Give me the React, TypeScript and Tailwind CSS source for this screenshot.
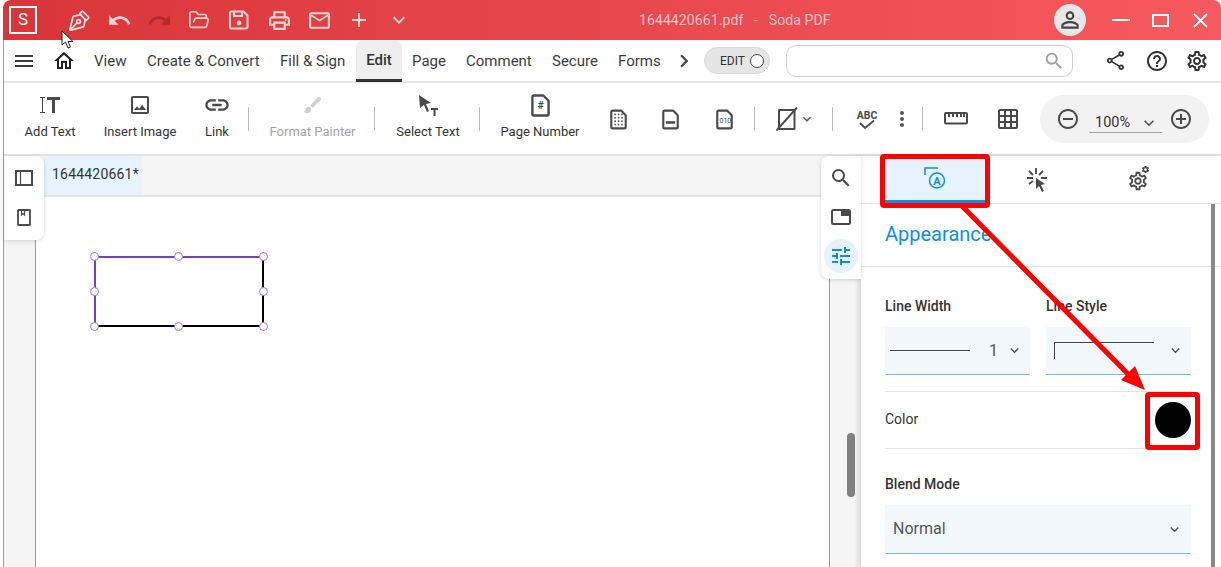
import React from "react";
import { PenTool, FolderOpen } from "lucide-react";
import {
  MdUndo, MdRedo, MdOutlinePrint, MdMailOutline, MdAdd, MdExpandMore, MdMenu, MdOutlineHome,
  MdChevronRight, MdOutlineShare, MdHelpOutline, MdOutlineSettings, MdSettings, MdSearch, MdRemoveCircleOutline,
  MdAddCircleOutline, MdOutlineImage, MdLink, MdBrush, MdMoreVert, MdTune, MdPersonOutline,
} from "react-icons/md";

const Sep = () => <div className="w-px h-6 bg-[#bdbdbd] shrink-0 mt-[24px]" />;

function Tool({ w, label, icon, muted }: { w: string; label: string; icon: React.ReactNode; muted?: boolean }) {
  return (
    <div className={`${w} shrink-0 flex flex-col items-center pt-[10px]`}>
      <div className="h-6 flex items-center justify-center">{icon}</div>
      <span className={`mt-[7px] text-[13px] leading-[16px] whitespace-nowrap ${muted ? "text-[#a3a3a3]" : "text-[#333]"}`}>{label}</span>
    </div>
  );
}

const DocShape = ({ w = 17, h = 21, children }: { w?: number; h?: number; children?: React.ReactNode }) => (
  <svg width={w} height={h} viewBox="0 0 20 24" fill="none" stroke="#4a4a4a" strokeWidth="2.500">
    <path d="M3 1.500h10l5.500 5.500v14a1.500 1.500 0 0 1-1.500 1.500H3A1.500 1.500 0 0 1 1.500 21V3A1.500 1.500 0 0 1 3 1.500z" strokeLinejoin="round" />
    {children}
  </svg>
);

function MenuItem({ w, children }: { w: string; children: React.ReactNode }) {
  return <span className={`${w} shrink-0 pt-[1px] text-[15px] text-[#3d3d3d] whitespace-nowrap`}>{children}</span>;
}

export default function App() {
  return (
    <div className="relative w-[1221px] h-[567px] overflow-hidden bg-white pl-[3px] flex flex-col" style={{ fontFamily: "Roboto, sans-serif" }}>
      {/* title bar */}
      <div className="h-10 shrink-0 rounded-t-lg bg-gradient-to-r from-[#d83538] to-[#f75960] flex items-center text-white">
        <div className="ml-[6px] w-[28px] h-[28px] border-2 border-white flex items-center justify-center text-[17px]">S</div>
        <div className="ml-[22px] flex items-center text-[#fbd5d6]">
          <span className="w-10 flex justify-center"><PenTool size={23} strokeWidth={1.8} className="text-[#fde3e3] -scale-y-100" /></span>
          <span className="w-10 flex justify-center"><MdUndo size={25} /></span>
          <span className="w-10 flex justify-center text-[#b02a30]"><MdRedo size={25} /></span>
          <span className="w-10 flex justify-center"><FolderOpen size={22} strokeWidth={1.8} /></span>
          <span className="w-10 flex justify-center">
            <svg width="20" height="20" viewBox="0 0 20 20" fill="none" stroke="currentColor" strokeWidth="2">
              <path d="M2.500 1.500h12l4 4v11.500a1.500 1.500 0 0 1-1.500 1.500H2.500A1.500 1.500 0 0 1 1 17V3a1.500 1.500 0 0 1 1.500-1.500z" />
              <path d="M5 2v4h8V2" />
              <circle cx="10" cy="13" r="2.400" fill="currentColor" stroke="none" />
            </svg>
          </span>
          <span className="w-10 flex justify-center"><MdOutlinePrint size={25} /></span>
          <span className="w-10 flex justify-center"><MdMailOutline size={25} /></span>
          <span className="w-10 flex justify-center"><MdAdd size={24} /></span>
          <span className="w-10 flex justify-center"><MdExpandMore size={24} /></span>
        </div>
        <div className="ml-[220px] text-[14px] text-[#fbc4c6] whitespace-pre w-[415px] tracking-[0.1px]">1644420661.pdf{"   -   "}Soda PDF</div>
        <div className="w-8 h-8 rounded-full bg-[#e8e8e8] flex items-center justify-center text-[#444]"><MdPersonOutline size={26} /></div>
        <div className="ml-[26px] w-[18px] h-[2px] bg-white" />
        <div className="ml-[22px] w-[17px] h-[13px] border-2 border-white" />
        <svg className="ml-[24px]" width="15" height="15" viewBox="0 0 15 15" stroke="white" strokeWidth="1.8"><path d="M1 1l13 13M14 1L1 14" /></svg>
      </div>

      <div className="flex-1 min-h-0 flex flex-col border-l border-[#9e9e9e]">
        {/* menu bar */}
        <div className="h-[43px] shrink-0 border-b-2 border-[#e6e6e6] flex items-center bg-white">
          <span className="ml-[8px] w-[40px]"><MdMenu size={24} className="text-[#3d3d3d]" /></span>
          <span className="w-[42px]"><MdOutlineHome size={24} className="text-[#222]" /></span>
          <MenuItem w="w-[53px]">View</MenuItem>
          <MenuItem w="w-[133px]">Create &amp; Convert</MenuItem>
          <MenuItem w="w-[76px]">Fill &amp; Sign</MenuItem>
          <div className="w-[46px] h-[41px] mt-[1px] pt-[2px] shrink-0 rounded-t-md bg-[#eeeeee] border-b-[3px] border-[#333] flex items-center justify-center text-[15px] font-medium text-[#333]">Edit</div>
          <MenuItem w="w-[54px] ml-[10px]">Page</MenuItem>
          <MenuItem w="w-[86px]">Comment</MenuItem>
          <MenuItem w="w-[66px]">Secure</MenuItem>
          <MenuItem w="w-[53px]">Forms</MenuItem>
          <MdChevronRight size={26} className="text-[#444] shrink-0" />
          <div className="ml-[7px] w-[66px] h-[27px] shrink-0 rounded-full bg-[#e5e5e5] border border-[#d9d9d9] flex items-center pl-[15px] text-[12px] text-[#333]">
            EDIT
            <span className="ml-[5px] w-[14px] h-[14px] rounded-full border border-[#444] bg-white" />
          </div>
          <div className="ml-[16px] w-[287px] h-[32px] shrink-0 rounded-[10px] border border-[#cfcfcf] flex items-center justify-end pr-[7px]">
            <MdSearch size={22} className="text-[#9e9e9e]" />
          </div>
          <MdOutlineShare size={23} className="ml-[31px] shrink-0 text-[#333]" />
          <MdHelpOutline size={24} className="ml-[18px] shrink-0 text-[#333]" />
          <MdOutlineSettings size={24} className="ml-[16px] shrink-0 text-[#333]" />
        </div>

        {/* toolbar */}
        <div className="h-[71px] shrink-0 flex items-start bg-white">
          <Tool w="w-[92px]" label="Add Text" icon={
            <svg width="20" height="16" viewBox="0 0 20 16" fill="#4a4a4a">
              <path d="M0 0h5v1H3v14h2v1H0v-1h2V1H0zM7 0h13v3h-5v13h-3V3H7z" />
            </svg>} />
          <Tool w="w-[88px]" label="Insert Image" icon={<MdOutlineImage size={24} className="text-[#4a4a4a]" />} />
          <Tool w="w-[64px] pl-[2px]" label="Link" icon={<MdLink size={28} className="text-[#4a4a4a]" />} />
          <Sep />
          <Tool w="w-[125px] pl-[2px]" label="Format Painter" muted icon={<MdBrush size={22} className="text-[#cfcfcf]" />} />
          <Sep />
          <Tool w="w-[104px] pl-[2px]" label="Select Text" icon={
            <svg width="22" height="22" viewBox="0 0 22 22" fill="#4a4a4a">
              <path d="M2 1l12 8-5 1 3 7-2 1-3-7-4 3z" /><path d="M14 14h7v2h-2.500v6h-2v-6H14z" />
            </svg>} />
          <Sep />
          <Tool w="w-[120px]" label="Page Number" icon={
            <DocShape w={19} h={23}><text x="10" y="16" fontSize="11" fontWeight="700" fill="#4a4a4a" stroke="none" textAnchor="middle" fontFamily="Roboto">#</text></DocShape>} />
          <div className="w-[8px] h-px shrink-0" />
          <div className="flex items-center mt-[24px] h-6 shrink-0">
            <span className="w-[20px] flex justify-center">
              <DocShape>
                <g fill="#4a4a4a" stroke="none">
                  {[6, 10, 14, 18].flatMap((y) => [6, 10, 14].map((x) => <circle key={`${x}-${y}`} cx={x} cy={y} r="1" />))}
                </g>
              </DocShape>
            </span>
            <span className="ml-[32px] w-[20px] flex justify-center">
              <DocShape><rect x="4.500" y="14" width="11" height="3" fill="#4a4a4a" stroke="none" /></DocShape>
            </span>
            <span className="ml-[34px] w-[20px] flex justify-center">
              <DocShape><text x="11" y="16.500" fontSize="8" fill="#4a4a4a" stroke="none" textAnchor="middle" fontFamily="Roboto">010</text></DocShape>
            </span>
          </div>
          <div className="ml-[20px]"><Sep /></div>
          <div className="flex items-center mt-[24px] ml-[21px] shrink-0">
            <svg width="22" height="24" viewBox="0 0 22 24" fill="none" stroke="#4a4a4a" strokeWidth="2">
              <path d="M3 3h15.500v19H3z" strokeLinejoin="round" /><path d="M0.500 23.500L21 0.500" />
            </svg>
            <MdExpandMore size={16} className="ml-[1px] text-[#555]" />
          </div>
          <div className="ml-[17px]"><Sep /></div>
          <div className="ml-[23px] mt-[26px] w-[22px] shrink-0 flex flex-col items-center">
            <svg width="24" height="22" viewBox="0 0 24 22" fill="none">
              <text x="12" y="9.500" fontSize="10.500" fontWeight="700" fill="#4a4a4a" textAnchor="middle" fontFamily="Roboto">ABC</text>
              <path d="M5 14l5 5 9-7.500" stroke="#4a4a4a" strokeWidth="1.800" />
            </svg>
          </div>
          <MdMoreVert size={24} className="mt-[24px] ml-[12px] shrink-0 text-[#555]" />
          <div className="ml-[8px]"><Sep /></div>
          <div className="ml-[21px] mt-[29px] shrink-0">
            <svg width="24" height="13" viewBox="0 0 24 13" fill="none" stroke="#4a4a4a" strokeWidth="2">
              <rect x="1" y="1" width="22" height="10.500" rx="1" />
              <path d="M5 1v4M9 1v4M13 1v4M17 1v4M20 1v4" />
            </svg>
          </div>
          <div className="ml-[30px] mt-[26px] shrink-0">
            <svg width="20" height="20" viewBox="0 0 20 20" fill="none" stroke="#4a4a4a" strokeWidth="2">
              <rect x="1" y="1" width="18" height="18" rx="1" />
              <path d="M7 1v18M13 1v18M1 7h18M1 13h18" />
            </svg>
          </div>
          <div className="ml-[22px] mt-[12px] w-[169px] h-[48px] shrink-0 rounded-[24px] bg-[#f2f2f2] flex items-center pl-[16px] text-[#4a4a4a]">
            <MdRemoveCircleOutline size={24} />
            <div className="ml-[9px] w-[73px] h-[30px] mb-[2px] pt-[10px] border-b border-[#a3a3a3] flex items-center pl-[6px] text-[14.500px] text-[#333]">
              100%
              <MdExpandMore size={20} className="ml-[9px] text-[#555]" />
            </div>
            <MdAddCircleOutline size={24} className="ml-[7px]" />
          </div>
        </div>

        {/* work area */}
        <div className="flex-1 min-h-0 flex border-t-2 border-[#e4e4e4] relative">
          <div className="flex-1 min-w-0 flex flex-col bg-[#f5f5f5]">
            <div className="h-[41px] shrink-0 border-b-2 border-[#e4e4e4] pl-[40px] flex">
              <div className="w-[98px] h-full bg-[#e6f3fd] pl-[8px] pb-[3px] flex items-center text-[14px] text-[#333] tracking-[0.2px]">1644420661*</div>
            </div>
            <div className="flex-1 min-h-0 flex">
              <div className="w-[31px] shrink-0" />
              <div className="w-[795px] shrink-0 bg-white border-x border-[#9e9e9e] relative">
                {/* selected shape */}
                <div className="absolute left-[58px] top-[59px] w-[170px] h-[71px] border-t-2 border-l-2 border-r-2 border-b-2 border-[#7b3fb8] border-b-black border-r-black">
                  {["-left-[6px] -top-[6px]", "left-[78px] -top-[6px]", "-right-[6px] -top-[6px]", "-left-[6px] top-[29px]", "-right-[6px] top-[29px]", "-left-[6px] -bottom-[6px]", "left-[78px] -bottom-[6px]", "-right-[6px] -bottom-[6px]"].map((c) => (
                    <span key={c} className={`absolute ${c} w-[9px] h-[9px] rounded-full bg-white border border-[#a875e0]`} />
                  ))}
                </div>
              </div>
              <div className="flex-1" />
            </div>
          </div>

          {/* right panel */}
          <div className="w-[360px] shrink-0 bg-white shadow-[-3px_0_5px_rgba(0,0,0,0.12)] relative z-10">
            <div className="h-[48px] border-b border-[#e2e2e2] pl-[24px] flex">
              <div className="w-[100px] h-full bg-[#e6f3fd] border-b-[3px] border-[#0a8fe5] flex items-center justify-center">
                <svg width="22" height="22" viewBox="0 0 22 22" fill="none" stroke="#0a8fe5" strokeWidth="1.500">
                  <path d="M1 8V1h13" /><circle cx="13" cy="13.500" r="7.500" />
                  <text x="13" y="17.500" fontSize="11" fontWeight="700" fill="#0a8fe5" stroke="none" textAnchor="middle" fontFamily="Roboto">A</text>
                </svg>
              </div>
              <div className="w-[104px] flex items-center justify-center">
                <svg width="22" height="24" viewBox="0 0 22 24" fill="#4a4a4a" stroke="#4a4a4a">
                  <path d="M10 0v6M1 10h6M3 3l4 4M17 3l-4 4M3 16l4-3M15 10h6" strokeWidth="1.800" fill="none" />
                  <path d="M10 10l9 6-4 1 3 6-2 1-3-6-3 3z" stroke="none" />
                </svg>
              </div>
              <div className="w-[98px] flex items-center justify-center relative text-[#4a4a4a]">
                <MdOutlineSettings size={22} className="mt-[3px]" />
                <MdSettings size={9} className="absolute left-[52px] top-[9px]" />
              </div>
            </div>
            <div className="absolute right-[6px] top-[48px] bottom-0 w-[4px] bg-[#888]" />
            <div className="pl-[24px] pr-[30px]">
              <div className="h-[63px] pb-[2px] flex items-center text-[20px] text-[#0a8fe5] -ml-[24px] -mr-[30px] pl-[24px] border-b border-[#e2e2e2]">Appearance</div>
              <div className="flex gap-4 pt-[29px]">
                <div className="w-[145px]">
                  <div className="text-[14px] font-medium leading-[20px] text-[#333]">Line Width</div>
                  <div className="mt-[11px] h-[48px] bg-[#f3f8fd] border-b border-[#7ab8e0] flex items-center pl-[5px] text-[#555]">
                    <span className="w-[80px] h-px bg-[#444]" />
                    <span className="ml-[19px] text-[16px]">1</span>
                    <MdExpandMore size={17} className="ml-[8px]" />
                  </div>
                </div>
                <div className="w-[145px]">
                  <div className="text-[14px] font-medium leading-[20px] text-[#333]">Line Style</div>
                  <div className="mt-[11px] h-[48px] bg-[#f3f8fd] border-b border-[#7ab8e0] flex items-center pl-[8px] text-[#555]">
                    <span className="w-[100px] h-[17px] border-l border-t border-[#444]" />
                    <MdExpandMore size={17} className="ml-[13px]" />
                  </div>
                </div>
              </div>
              <div className="mt-[16px] h-[58px] border-y border-[#e2e2e2] flex items-center justify-between">
                <span className="text-[14px] text-[#333] pb-[2px]">Color</span>
                <span className="w-9 h-9 rounded-full bg-black" />
              </div>
              <div className="mt-[25px] text-[14px] font-medium leading-[20px] text-[#333]">Blend Mode</div>
              <div className="mt-[11px] h-[49px] bg-[#f3f8fd] border-b border-[#7ab8e0] flex items-center justify-between pl-[8px] pr-[8px] text-[16px] text-[#555]">
                Normal
                <MdExpandMore size={17} />
              </div>
            </div>
          </div>

          {/* floating left card */}
          <div className="absolute left-0 top-0 w-[40px] h-[84px] bg-white rounded-r-lg rounded-bl-none shadow-[0_1px_4px_rgba(0,0,0,0.15)] z-10 flex flex-col items-center pt-[14px] gap-[23px]">
            <svg width="18" height="16" viewBox="0 0 18 16" fill="none" stroke="#4a4a4a" strokeWidth="2"><rect x="1" y="1" width="16" height="14" /><path d="M5.500 1v14" strokeWidth="1.200" /></svg>
            <svg width="14" height="17" viewBox="0 0 14 17" fill="none" stroke="#4a4a4a" strokeWidth="1.800"><rect x="1" y="1" width="12" height="15" rx="0.500" /><path d="M4.500 1v5l1.500-1.500L7.500 6V1" strokeWidth="1.200" /></svg>
          </div>

          {/* floating right card */}
          <div className="absolute left-[817px] top-0 w-[40px] h-[123px] bg-white rounded-l-lg shadow-[0_1px_4px_rgba(0,0,0,0.15)] z-20 flex flex-col items-center pt-[10px]">
            <MdSearch size={24} className="text-[#4a4a4a]" />
            <svg className="mt-[19px]" width="20" height="16" viewBox="0 0 20 16" fill="none" stroke="#4a4a4a" strokeWidth="2"><rect x="1" y="1" width="18" height="14" rx="1.500" /><rect x="10" y="1" width="9" height="6" fill="#4a4a4a" stroke="none" /></svg>
            <div className="mt-[14px] w-[34px] h-[34px] rounded-full bg-[#e6f3fd] flex items-center justify-center"><MdTune size={24} className="text-[#0a8fe5]" /></div>
          </div>

          {/* canvas scrollbar */}
          <div className="absolute left-[843px] top-[277px] w-[8px] h-[64px] rounded bg-[#808080] z-[5]" />
        </div>
      </div>

      {/* annotation overlay */}
      <div className="absolute left-[880px] top-[154px] w-[110px] h-[54px] border-[5px] border-[#ff0000] rounded-sm z-30" />
      <div className="absolute left-[1145px] top-[392px] w-[55px] h-[58px] border-[5px] border-[#ff0000] rounded-sm z-30" />
      <svg className="absolute left-0 top-0 z-30 pointer-events-none" width="1221" height="567" viewBox="0 0 1221 567">
        <path d="M962 206L1128 374" stroke="#ff0000" strokeWidth="5" />
        <path d="M1145 390L1121 380 1135 366z" fill="#ff0000" />
      </svg>
      {/* mouse pointer */}
      <svg className="absolute left-[61px] top-[30px] z-40" width="13" height="19" viewBox="0 0 13 19">
        <path d="M1 1v14l3.500-3 2.500 6 2.500-1-2.500-5.500H12z" fill="white" stroke="#222" strokeWidth="1" strokeLinejoin="round" />
      </svg>
    </div>
  );
}
